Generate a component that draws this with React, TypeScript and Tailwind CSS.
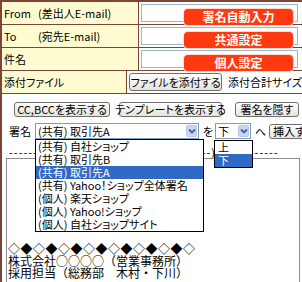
import React from "react";

const BR = "border-[#7d4536]";

function Chevron() {
  return (
    <svg width="8" height="6" viewBox="0 0 8 6">
      <path d="M1 1.5 L4 4.5 L7 1.5" fill="none" stroke="#4d6185" strokeWidth="1.8" />
    </svg>
  );
}

function Btn({ children, className }: { children: React.ReactNode; className: string }) {
  return (
    <div
      className={
        "flex items-center justify-center rounded-[3px] border border-[#6f6f6f] bg-gradient-to-b from-white to-[#e4e4dc] text-[11px] leading-none whitespace-nowrap " +
        className
      }
    >
      {children}
    </div>
  );
}

function Badge({ children }: { children: React.ReactNode }) {
  return (
    <div className="flex h-[16px] w-[109px] items-center justify-center rounded-[4px] bg-[#ff3a10] text-[12px] font-bold leading-none text-white shadow-[0_0_0_1px_#ffd9cc]">
      {children}
    </div>
  );
}

export default function App() {
  const items = [
    "(共有) 自社ショップ",
    "(共有) 取引先B",
    "(共有) 取引先A",
    "(共有) Yahoo！ショップ全体署名",
    "(個人) 楽天ショップ",
    "(個人) Yahoo!ショップ",
    "(個人) 自社ショップサイト",
  ];
  return (
    <div className="relative h-[282px] w-[302px] overflow-hidden bg-white font-['Noto_Sans_CJK_JP',sans-serif] text-black [font-feature-settings:'palt']">
      <div className={"h-full border-l-2 border-t-2 " + BR}>
        {/* form table */}
        <div>
          <div className={"flex h-[23px] border-b " + BR}>
            <div className={"flex w-[137px] items-center border-r bg-[#fffbd0] pl-[2px] text-[11px] leading-none " + BR}>
              <span className="w-[34px]">From</span>
              <span>(差出人E-mail)</span>
            </div>
            <div className="flex flex-1 items-center pl-[2px]">
              <div className="h-[18px] w-[157px] border border-[#a3b1c4] bg-white" />
            </div>
          </div>
          <div className={"flex h-[23px] border-b " + BR}>
            <div className={"flex w-[137px] items-center border-r bg-[#fffbd0] pl-[2px] text-[11px] leading-none " + BR}>
              <span className="w-[34px]">To</span>
              <span>(宛先E-mail)</span>
            </div>
            <div className="flex flex-1 items-center pl-[2px]">
              <div className="h-[18px] w-[157px] border border-[#a3b1c4] bg-white" />
            </div>
          </div>
          <div className={"flex h-[23px] border-b " + BR}>
            <div className={"flex w-[137px] items-center border-r bg-[#fffbd0] pl-[2px] text-[11px] leading-none " + BR}>
              <span>件名</span>
            </div>
            <div className="flex flex-1 items-center pl-[2px]">
              <div className="h-[18px] w-[157px] border border-[#a3b1c4] bg-white" />
            </div>
          </div>
          <div className={"flex h-[23px] border-b " + BR}>
            <div className={"flex w-[137px] items-center border-r bg-[#fffbd0] pl-[2px] text-[11px] leading-none " + BR}>
              <span>添付ファイル</span>
            </div>
            <div className="flex flex-1 items-center whitespace-nowrap pl-[2px] text-[11px] leading-none">
              <Btn className="h-[18px] w-[93px] shrink-0">ファイルを添付する</Btn>
              <span className="ml-[6px]">添付合計サイズ</span>
            </div>
          </div>
        </div>

        {/* buttons */}
        <div className="mt-[8px] flex h-[15px] pl-[12px]">
          <Btn className="w-[96px] shrink-0">CC,BCCを表示する</Btn>
          <Btn className="ml-[9px] w-[103px] shrink-0">テンプレートを表示する</Btn>
          <Btn className="ml-[13px] w-[64px] shrink-0">署名を隠す</Btn>
        </div>

        {/* signature row */}
        <div className="mt-[6px] flex h-[16px] items-center whitespace-nowrap pl-[7px] text-[11px] leading-none">
          <span className="w-[26px] shrink-0">署名</span>
          <div className="flex h-[16px] w-[164px] shrink-0 items-center border border-[#7f9db9] bg-white">
            <span className="flex-1 pl-[2px]">(共有) 取引先A</span>
            <div className="mr-[1px] flex h-[12px] w-[11px] items-center justify-center rounded-[2px] border border-[#b6c8f2] bg-[#c7d6fb]">
              <Chevron />
            </div>
          </div>
          <span className="ml-[4px] w-[11px] shrink-0">を</span>
          <div className="ml-[1px] flex h-[16px] w-[36px] shrink-0 items-center border border-[#7f9db9] bg-white">
            <span className="flex-1 pl-[2px]">下</span>
            <div className="mr-[1px] flex h-[12px] w-[11px] items-center justify-center rounded-[2px] border border-[#b6c8f2] bg-[#c7d6fb]">
              <Chevron />
            </div>
          </div>
          <span className="ml-[4px] w-[11px] shrink-0">へ</span>
          <Btn className="ml-[3px] h-[15px] w-[50px] shrink-0">挿入する</Btn>
        </div>

        {/* dashed line */}
        <div className="mt-[8px] h-[11px] overflow-hidden whitespace-nowrap pl-[7px] text-[11px] leading-[11px] tracking-[1px]">
          ------------------------------------------)-------------
        </div>

        {/* body textarea */}
        <div className="ml-[4px] h-[130px] w-[294px] border border-[#8c8c8c] bg-white pl-[1px] pt-[84px] font-['Noto_Sans_CJK_JP',sans-serif] text-[12px] leading-[12px] [font-feature-settings:normal]">
          <div className="tracking-[0.5px]">◇◆◇◆◇◆◇◆◇◆◇◆◇◆◇</div>
          <div className="whitespace-nowrap">株式会社○○○○（営業事務所）</div>
          <div className="whitespace-nowrap">採用担当（総務部　木村・下川）</div>
        </div>
      </div>

      {/* annotation badges */}
      <div className="absolute left-[184px] top-[9px] flex flex-col gap-[7px]">
        <Badge>署名自動入力</Badge>
        <Badge>共通設定</Badge>
        <Badge>個人設定</Badge>
      </div>

      {/* open dropdown list 1 */}
      <div className="absolute left-[35px] top-[139px] w-[169px] border border-black bg-white text-[11px] leading-none">
        {items.map((t, i) => (
          <div
            key={i}
            className={
              "flex h-[13px] items-center whitespace-nowrap pl-[2px] " +
              (i === 2 ? "bg-[#316ac5] text-white" : "")
            }
          >
            {t}
          </div>
        ))}
      </div>

      {/* open dropdown list 2 */}
      <div className="absolute left-[214px] top-[140px] w-[39px] border border-black bg-white text-[11px] leading-none">
        <div className="flex h-[13px] items-center pl-[3px]">上</div>
        <div className="flex h-[13px] items-center bg-[#316ac5] pl-[3px] text-white">下</div>
      </div>
    </div>
  );
}
